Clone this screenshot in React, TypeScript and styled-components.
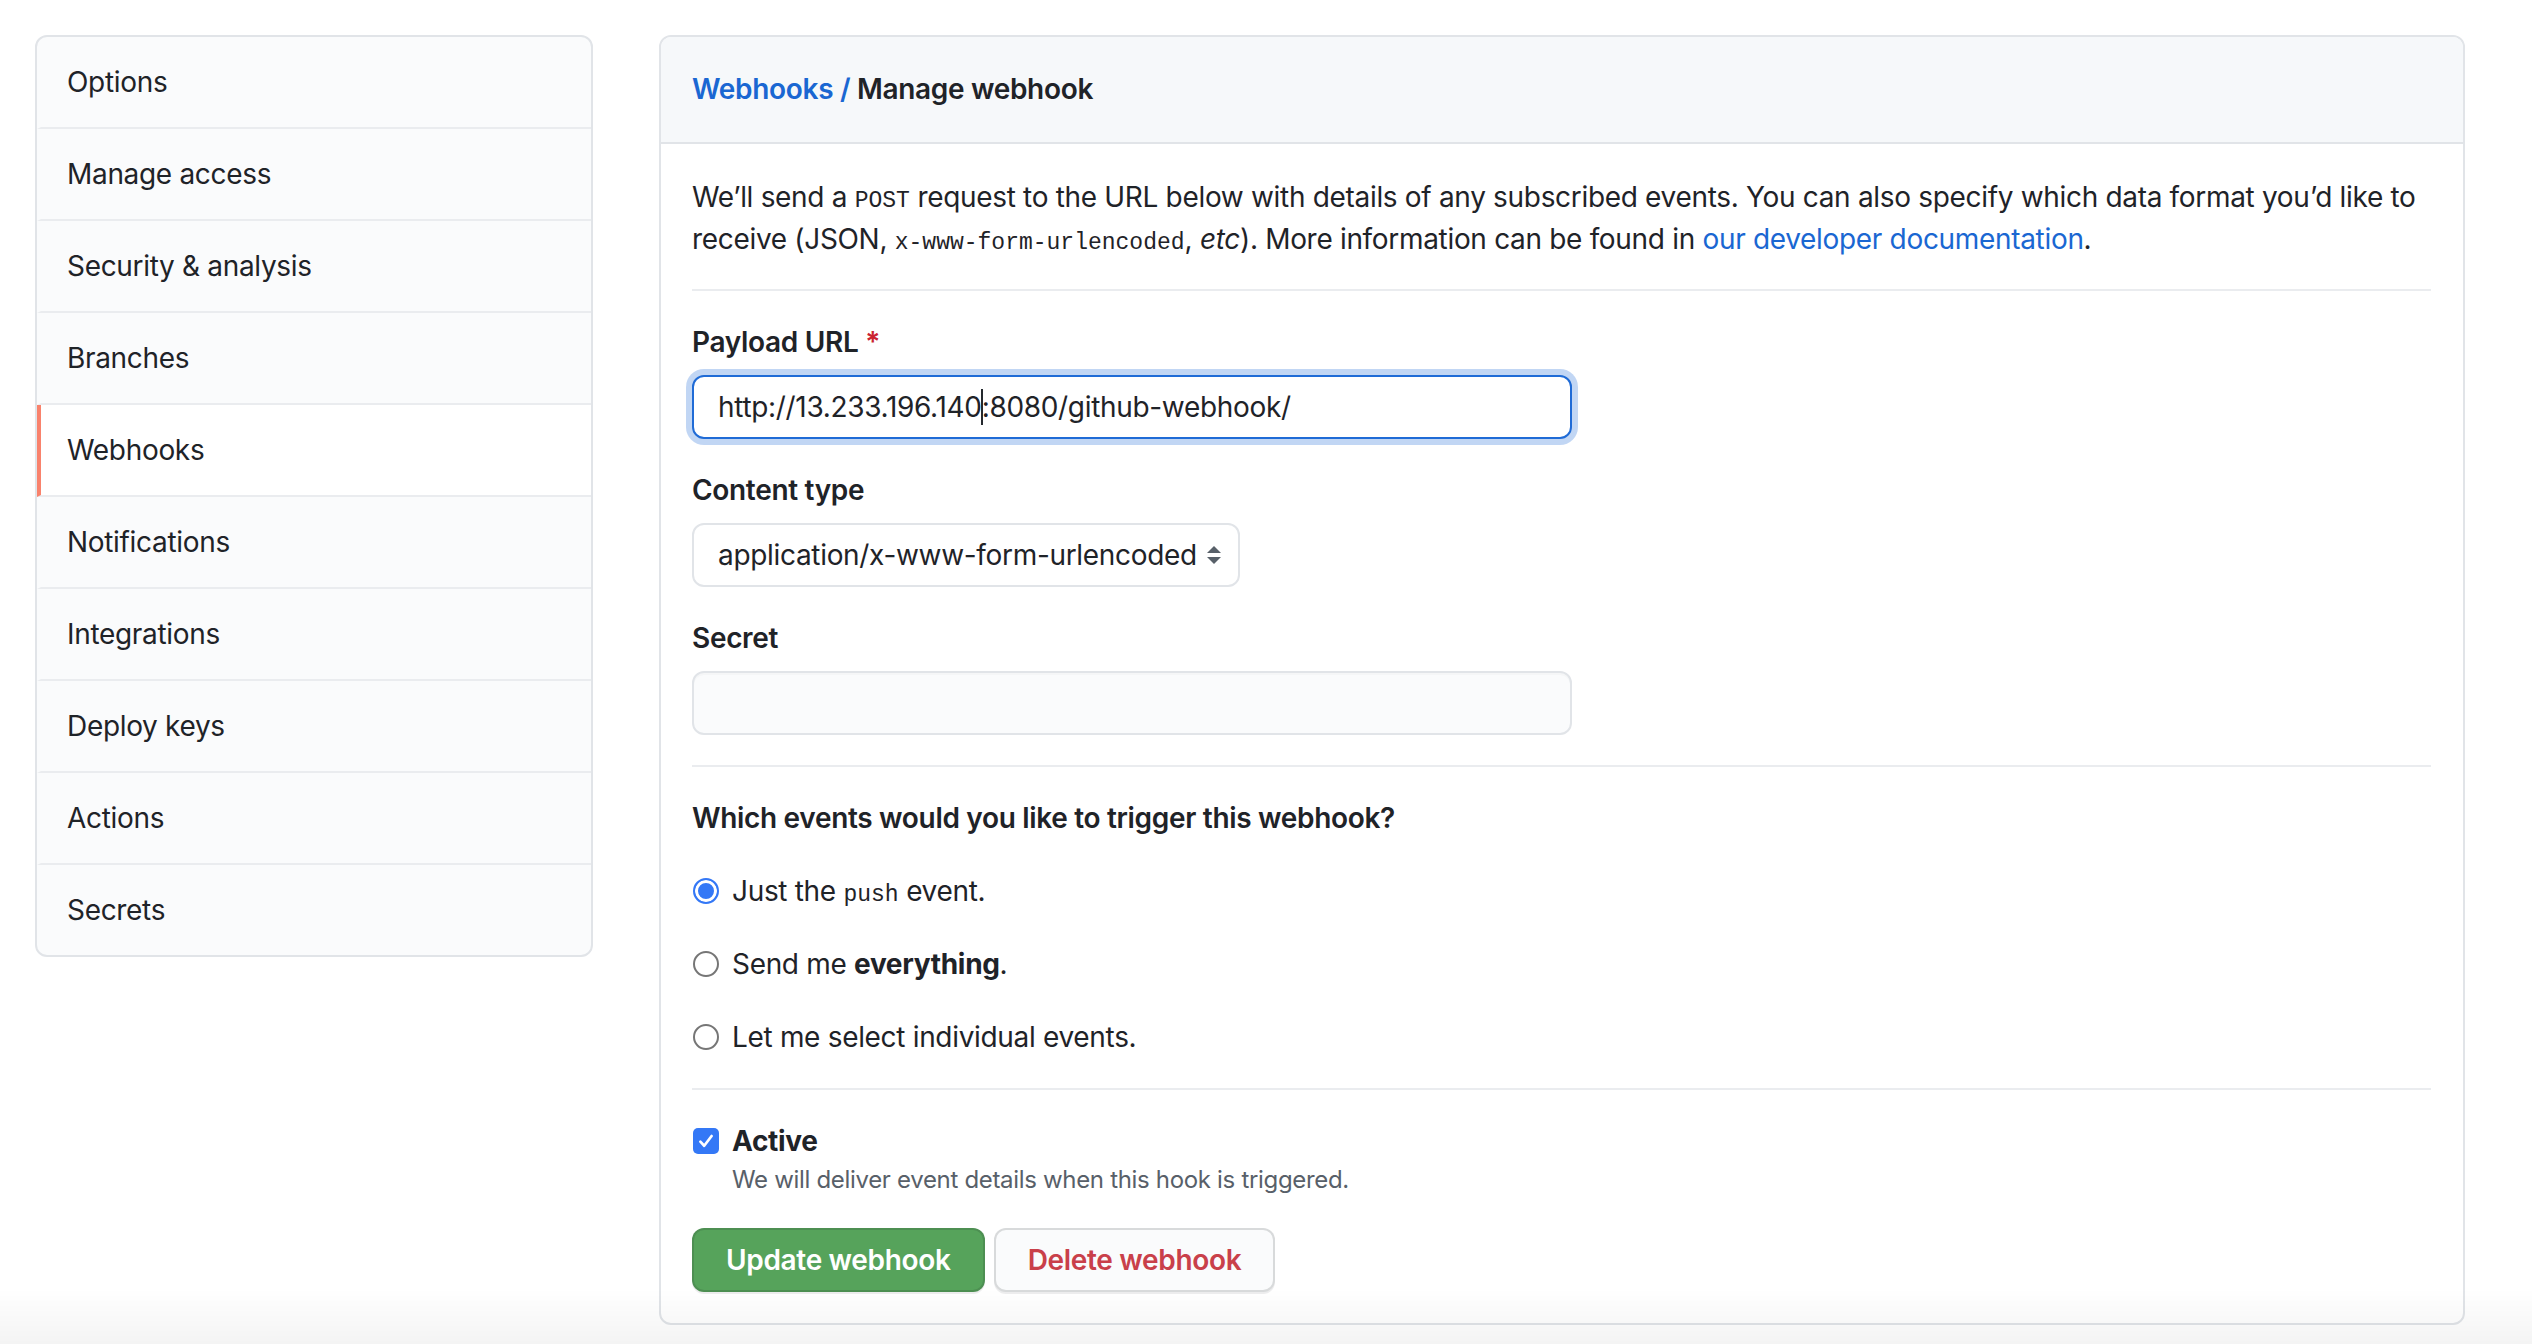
import styled, { createGlobalStyle } from 'styled-components';

const GlobalStyle = createGlobalStyle`
  * { box-sizing: border-box; }
  html, body {
    margin: 0;
    padding: 0;
    background: #fff;
  }
  body {
    font-family: Inter, "Liberation Sans", sans-serif;
    font-size: 28px;
    line-height: 1.5;
    letter-spacing: -0.32px;
    color: #1f2328;
  }
`;

const menuItems = [
  'Options',
  'Manage access',
  'Security & analysis',
  'Branches',
  'Webhooks',
  'Notifications',
  'Integrations',
  'Deploy keys',
  'Actions',
  'Secrets',
];

export default function App() {
  return (
    <>
      <GlobalStyle />
      <Page>
        <SideMenu>
          {menuItems.map((item) => (
            <MenuItem key={item} $selected={item === 'Webhooks'}>
              {item}
            </MenuItem>
          ))}
        </SideMenu>

        <Panel>
          <PanelHeader>
            <Crumb>Webhooks /</Crumb> Manage webhook
          </PanelHeader>
          <PanelBody>
            <Intro>
              We’ll send a <Code>POST</Code> request to the URL below with details of any subscribed
              events. You can also specify which data format you’d like to receive (JSON,{' '}
              <Code>x-www-form-urlencoded</Code>, <em>etc</em>). More information can be found in{' '}
              <Link>our developer documentation</Link>.
            </Intro>
            <Rule />

            <FormGroup>
              <Label>
                Payload URL <Required>*</Required>
              </Label>
              <TextField $focused role="textbox">
                http://13.233.196.140<Caret />:8080/github-webhook/
              </TextField>
            </FormGroup>

            <FormGroup>
              <Label>Content type</Label>
              <Select>
                <span>application/x-www-form-urlencoded</span>
                <svg width="16" height="20" viewBox="0 0 16 20">
                  <path d="M8 1 L15 8 L1 8 Z" fill="#586069" />
                  <path d="M1 12 L15 12 L8 19 Z" fill="#586069" />
                </svg>
              </Select>
            </FormGroup>

            <FormGroup>
              <Label>Secret</Label>
              <TextField role="textbox" />
            </FormGroup>
            <Rule />

            <FormGroup>
              <Label>Which events would you like to trigger this webhook?</Label>
              <Choice>
                <Radio $checked />
                <span>
                  Just the <Code>push</Code> event.
                </span>
              </Choice>
              <Choice>
                <Radio />
                <span>
                  Send me <strong>everything</strong>.
                </span>
              </Choice>
              <Choice>
                <Radio />
                <span>Let me select individual events.</span>
              </Choice>
            </FormGroup>
            <Rule />

            <FormGroup>
              <CheckRow>
                <Checkbox>
                  <svg width="18" height="18" viewBox="0 0 16 16">
                    <path
                      d="M3 8.6 L6.4 12.2 L13 3.6"
                      fill="none"
                      stroke="#fff"
                      strokeWidth="2.4"
                      strokeLinecap="round"
                      strokeLinejoin="round"
                    />
                  </svg>
                </Checkbox>
                <strong>Active</strong>
              </CheckRow>
              <Note>We will deliver event details when this hook is triggered.</Note>
            </FormGroup>

            <Actions>
              <Button $variant="primary">Update webhook</Button>
              <Button $variant="danger">Delete webhook</Button>
            </Actions>
          </PanelBody>
        </Panel>
      </Page>
      <BottomFade />
    </>
  );
}

const Page = styled.div`
  display: flex;
  align-items: flex-start;
  gap: 66px;
  padding: 35px 67px 21px 35px;
`;

const SideMenu = styled.nav`
  flex: 0 0 558px;
  border: 2px solid #e1e4e8;
  border-radius: 12px;
  background: #fafbfc;
  overflow: hidden;
`;

const MenuItem = styled.div<{ $selected?: boolean }>`
  padding: 24px 32px 24px 26px;
  line-height: 42px;
  border-left: 4px solid ${(p) => (p.$selected ? '#f9826c' : 'transparent')};
  border-bottom: 2px solid #eaecef;
  background: ${(p) => (p.$selected ? '#fff' : 'transparent')};
  &:last-child {
    border-bottom: 0;
  }
`;

const Panel = styled.section`
  flex: 1;
  border: 2px solid #e1e4e8;
  border-radius: 12px;
  overflow: hidden;
  background: #fff;
`;

const PanelHeader = styled.div`
  padding: 31px 32px 32px 31px;
  background: #f6f8fa;
  border-bottom: 2px solid #e1e4e8;
  font-weight: 600;
  line-height: 42px;
`;

const Crumb = styled.a`
  color: #1a67d2;
`;

const PanelBody = styled.div`
  padding: 32px 32px 31px 31px;
`;

const Intro = styled.p`
  margin: 0 0 29px;
  line-height: 42px;
`;

const Code = styled.code`
  font-family: "Liberation Mono", "DejaVu Sans Mono", monospace;
  font-size: 23px;
  line-height: 1;
  letter-spacing: 0;
`;

const Link = styled.a`
  color: #1a67d2;
`;

const Rule = styled.hr`
  margin: 0;
  border: 0;
  border-top: 2px solid #eaecef;
`;

const FormGroup = styled.div`
  margin: 30px 0;
`;

const Label = styled.label`
  display: block;
  margin-bottom: 12px;
  font-weight: 600;
  line-height: 42px;
`;

const Required = styled.span`
  color: #cb2431;
`;

const TextField = styled.div<{ $focused?: boolean }>`
  display: flex;
  align-items: center;
  width: 880px;
  height: 64px;
  padding: 0 24px;
  border: 2px solid ${(p) => (p.$focused ? '#1f6bd6' : '#e1e4e8')};
  border-radius: 12px;
  background: ${(p) => (p.$focused ? '#fff' : '#fafbfc')};
  box-shadow: ${(p) =>
    p.$focused ? '0 0 0 6px rgba(31, 107, 214, 0.28)' : 'inset 0 2px 0 rgba(225, 228, 232, 0.2)'};
  font-size: 28px;
  white-space: pre;
`;

const Caret = styled.span`
  display: inline-block;
  width: 2px;
  height: 36px;
  margin: 0 -1px;
  background: #24292e;
`;

const Select = styled.div`
  display: flex;
  align-items: center;
  justify-content: space-between;
  width: 548px;
  height: 64px;
  padding: 0 16px 0 24px;
  border: 2px solid #e1e4e8;
  border-radius: 12px;
  background: #fff;
  white-space: nowrap;
`;

const Choice = styled.div`
  display: flex;
  align-items: center;
  gap: 13px;
  margin: 31px 0 0;
  line-height: 42px;
`;

const CheckRow = styled.div`
  display: flex;
  align-items: center;
  gap: 13px;
  line-height: 42px;
`;

const Radio = styled.span<{ $checked?: boolean }>`
  flex: 0 0 26px;
  height: 26px;
  margin-left: 1px;
  border-radius: 50%;
  border: 2px solid ${(p) => (p.$checked ? '#3478f6' : '#767676')};
  background: ${(p) => (p.$checked ? '#3478f6' : '#fff')};
  box-shadow: ${(p) => (p.$checked ? 'inset 0 0 0 3px #fff' : 'none')};
`;

const Checkbox = styled.span`
  display: flex;
  align-items: center;
  justify-content: center;
  flex: 0 0 26px;
  height: 26px;
  margin-left: 1px;
  border-radius: 5px;
  background: #3478f6;
`;

const Note = styled.p`
  margin: 0;
  padding-left: 40px;
  font-size: 24px;
  line-height: 36px;
  color: #586069;
`;

const Actions = styled.div`
  display: flex;
  gap: 9px;
  margin-top: 30px;
`;

const Button = styled.button<{ $variant: 'primary' | 'danger' }>`
  height: 64px;
  padding: 0 32px;
  border-radius: 12px;
  font-family: inherit;
  font-size: 28px;
  font-weight: 600;
  letter-spacing: -0.32px;
  border: 2px solid rgba(27, 31, 35, 0.15);
  box-shadow: 0 2px 0 rgba(27, 31, 35, 0.08);
  color: ${(p) => (p.$variant === 'primary' ? '#fff' : '#c9404a')};
  background: ${(p) => (p.$variant === 'primary' ? '#56a35b' : '#fafbfc')};
`;

const BottomFade = styled.div`
  position: fixed;
  left: 0;
  right: 0;
  bottom: 0;
  height: 56px;
  pointer-events: none;
  background: linear-gradient(rgba(0, 0, 0, 0), rgba(0, 0, 0, 0.045));
`;
